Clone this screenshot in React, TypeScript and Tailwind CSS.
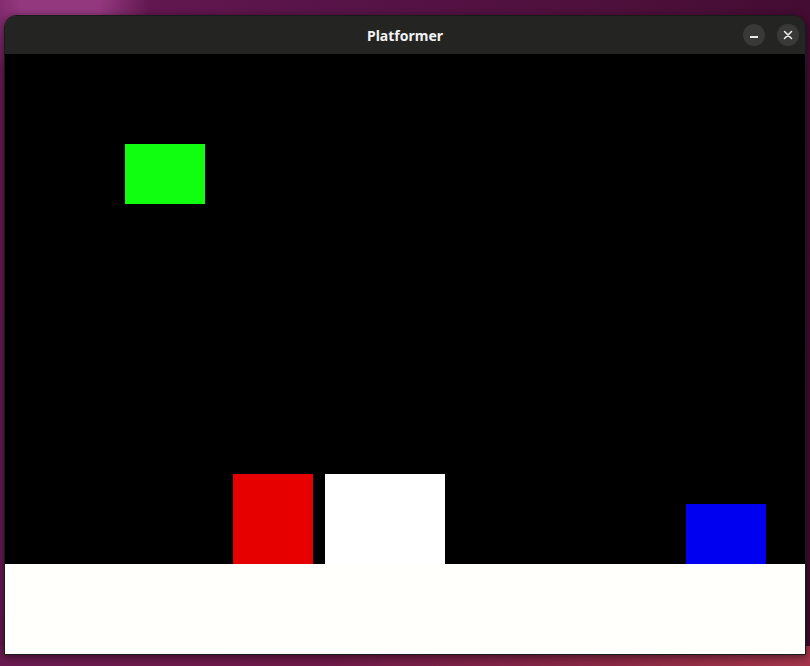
import React from "react";

type Block = { x: number; y: number; w: number; h: number; color: string };

// positions are relative to the 800x600 game canvas
const blocks: Block[] = [
  { x: 120, y: 90, w: 80, h: 60, color: "bg-[#10ff10]" },
  { x: 228, y: 420, w: 80, h: 90, color: "bg-[#e60000]" },
  { x: 320, y: 420, w: 120, h: 90, color: "bg-[#ffffff]" },
  { x: 681, y: 450, w: 80, h: 60, color: "bg-[#0000f0]" },
];

export default function App() {
  return (
    <div className="relative h-[666px] w-[810px] overflow-hidden bg-[radial-gradient(circle_at_60px_0px,#93387f_0px,#93387f_40px,transparent_90px),linear-gradient(100deg,#6a1a55_0%,#581448_35%,#4c0f3a_70%,#3e0a2c_100%)] font-['Noto_Sans','DejaVu_Sans',sans-serif]">
      <div className="absolute bottom-0 left-0 h-[20px] w-full bg-[linear-gradient(90deg,#6a1a50_0%,#6e1a48_40%,#8a2844_75%,#a3354a_100%)]" />
      <div className="absolute left-[4px] top-[15px] w-[802px] overflow-hidden rounded-t-[12px] border border-[#1a1a1a] shadow-[0_2px_8px_rgba(0,0,0,0.5)]">
        <div className="relative flex h-[38px] items-center justify-center bg-[#242422]">
          <span className="text-[14px] font-bold text-[#f2f2f2]">Platformer</span>
          <div className="absolute right-[6px] top-[8px] flex gap-[12px]">
            <button className="flex h-[22px] w-[22px] items-center justify-center rounded-full bg-[#393937]">
              <span className="mt-[4px] block h-[2px] w-[8px] bg-[#e8e8e8]" />
            </button>
            <button className="flex h-[22px] w-[22px] items-center justify-center rounded-full bg-[#393937]">
              <svg width="10" height="10" viewBox="0 0 10 10">
                <path d="M1.5 1.5 L8.5 8.5 M8.5 1.5 L1.5 8.5" stroke="#ececec" strokeWidth="1.6" strokeLinecap="round" />
              </svg>
            </button>
          </div>
        </div>
        <div className="relative flex h-[600px] w-[800px] flex-col justify-end bg-black">
          {blocks.map((b, i) => (
            <div
              key={i}
              className={`absolute ${b.color}`}
              style={{ left: b.x, top: b.y, width: b.w, height: b.h }}
            />
          ))}
          <div className="h-[90px] w-full bg-[#fffffb]" />
        </div>
      </div>
    </div>
  );
}
